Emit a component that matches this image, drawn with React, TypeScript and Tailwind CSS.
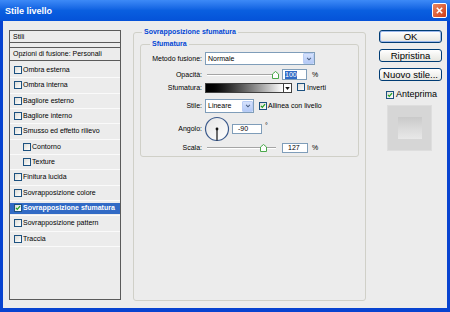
import React from "react";

const styles = [
  { label: "Ombra esterna" },
  { label: "Ombra interna" },
  { label: "Bagliore esterno" },
  { label: "Bagliore interno" },
  { label: "Smusso ed effetto rilievo" },
  { label: "Contorno", indent: true },
  { label: "Texture", indent: true },
  { label: "Finitura lucida" },
  { label: "Sovrapposizione colore" },
  { label: "Sovrapposizione sfumatura", checked: true, selected: true },
  { label: "Sovrapposizione pattern" },
  { label: "Traccia" },
];

function Check({ on, size = "w-[8px] h-[8px]" }: { on?: boolean; size?: string }) {
  return (
    <span
      className={`inline-flex shrink-0 items-center justify-center border border-[#1c5180] bg-gradient-to-br from-[#dcdcd7] to-white ${size}`}
    >
      {on && (
        <svg viewBox="0 0 8 8" className="h-full w-full">
          <path d="M1.3 3.8 L3.1 5.8 L6.7 1.6" stroke="#21a121" strokeWidth="1.7" fill="none" />
        </svg>
      )}
    </span>
  );
}

function Arrow() {
  return (
    <span className="flex h-[11px] w-[11px] shrink-0 items-center justify-center rounded-[1px] border border-[#b9cdf5] bg-gradient-to-b from-[#d6e2fc] to-[#b3c9f6]">
      <svg viewBox="0 0 8 8" className="h-[6px] w-[6px]">
        <path d="M1.5 2.5 L4 5 L6.5 2.5" stroke="#4d6185" strokeWidth="1.4" fill="none" />
      </svg>
    </span>
  );
}

function Thumb() {
  return (
    <svg viewBox="0 0 7 8" className="h-[8px] w-[7px]">
      <path d="M3.5 0.5 L6.5 3 L6.5 7.5 L0.5 7.5 L0.5 3 Z" fill="#fdfdfd" stroke="#4aa84a" strokeWidth="1" />
    </svg>
  );
}

function Slider({ at }: { at: number }) {
  return (
    <div className="relative ml-[5px] h-full w-[74px]">
      <div className="absolute left-0 right-[5px] top-1/2 h-[2px] -translate-y-1/2 border-t border-[#a5a5a5] border-b border-b-white" />
      <div className="absolute top-1/2 -translate-y-1/2" style={{ left: at }}>
        <Thumb />
      </div>
    </div>
  );
}

function Label({ children }: { children: React.ReactNode }) {
  return <span className="w-[61px] shrink-0 text-right">{children}</span>;
}

export default function App() {
  return (
    <div className="flex h-[312px] w-[450px] flex-col bg-[#0843d0] font-['Liberation_Sans',Arial,sans-serif] text-[7px] leading-[8px] text-black">
      <div className="flex h-[21px] shrink-0 items-center justify-between bg-gradient-to-b from-[#3d8af7] via-[#0a5fe0] to-[#0552d8]">
        <span className="pl-[5px] text-[9px] font-bold text-white">Stile livello</span>
        <span className="mr-[3px] flex h-[15px] w-[15px] items-center justify-center rounded-[2px] border border-white bg-gradient-to-br from-[#e9865f] to-[#cf3a12]">
          <svg viewBox="0 0 10 10" className="h-[9px] w-[9px]">
            <path d="M2 2 L8 8 M8 2 L2 8" stroke="white" strokeWidth="1.8" />
          </svg>
        </span>
      </div>

      <div className="mx-[3px] mb-[4px] flex flex-1 items-start bg-[#ececec]">
        {/* styles list */}
        <div className="ml-[6px] mt-[9px] h-[270px] w-[112px] border border-[#5a5a5a]">
          <div className="flex h-[12px] items-center border-b border-[#5a5a5a] pl-[3px]">Stili</div>
          <div className="h-[5px] border-b border-[#5a5a5a]" />
          <div className="flex h-[13px] items-center border-b border-[#5a5a5a] pl-[3px]">
            Opzioni di fusione: Personali
          </div>
          <div className="pt-[2px]">
            {styles.map((s) => (
              <div key={s.label} className="flex h-[15.33px] items-center border-b border-[#fafafa]">
                <div
                  className={`flex h-[11px] w-full items-center ${s.indent ? "pl-[13px]" : "pl-[4px]"} ${
                    s.selected ? "bg-[#316ac5] font-bold text-white" : ""
                  }`}
                >
                  <Check on={s.checked} />
                  <span className="ml-[1px]">{s.label}</span>
                </div>
              </div>
            ))}
          </div>
        </div>

        {/* options */}
        <fieldset className="ml-[12px] mt-[7px] h-[273px] w-[231px] rounded-[3px] border border-[#d0d0c8] px-[6px]">
          <legend className="ml-[2px] px-[2px] font-bold text-[#0046d5]">Sovrapposizione sfumatura</legend>
          <fieldset className="mt-[4px] w-[219px] rounded-[3px] border border-[#d0d0c8]">
            <legend className="ml-[9px] px-[2px] font-bold text-[#0046d5]">Sfumatura</legend>
            <div className="flex flex-col pb-[3px] pt-[4px]">
              <div className="flex h-[13px] items-center">
                <Label>Metodo fusione:</Label>
                <div className="ml-[3px] flex h-[13px] w-[110px] items-center justify-between border border-[#7f9db9] bg-white pl-[2px]">
                  <span>Normale</span>
                  <Arrow />
                </div>
              </div>

              <div className="mt-[4px] flex h-[11px] items-center">
                <Label>Opacità:</Label>
                <Slider at={65} />
                <div className="ml-[1px] flex h-[11px] w-[25px] items-center border border-[#7f9db9] bg-white pl-[2px]">
                  <span className="bg-[#316ac5] text-white">100</span>
                </div>
                <span className="ml-[5px]">%</span>
              </div>

              <div className="mt-[3px] flex h-[10px] items-center">
                <Label>Sfumatura:</Label>
                <div className="ml-[3px] flex h-[10px] w-[87px] border border-[#404040] bg-white">
                  <div className="flex-1 bg-gradient-to-r from-black to-white" />
                  <div className="flex w-[8px] items-center justify-center border-l border-[#404040]">
                    <svg viewBox="0 0 6 4" className="h-[3px] w-[5px]">
                      <path d="M0 0 L6 0 L3 4 Z" fill="#111" />
                    </svg>
                  </div>
                </div>
                <span className="ml-[5px]">
                  <Check />
                </span>
                <span className="ml-[2px]">Inverti</span>
              </div>

              <div className="mt-[6px] flex h-[14px] items-center">
                <Label>Stile:</Label>
                <div className="ml-[3px] flex h-[14px] w-[49px] items-center justify-between border border-[#7f9db9] bg-white pl-[2px]">
                  <span>Lineare</span>
                  <Arrow />
                </div>
                <span className="ml-[5px]">
                  <Check on />
                </span>
                <span className="ml-[1px]">Allinea con livello</span>
              </div>

              <div className="mt-[3px] flex h-[25px] items-center">
                <Label>Angolo:</Label>
                <svg viewBox="0 0 26 26" className="ml-[2px] h-[26px] w-[26px]">
                  <defs>
                    <linearGradient id="dial" x1="0" y1="0" x2="1" y2="1">
                      <stop offset="0" stopColor="#e4e4e4" />
                      <stop offset="1" stopColor="#ffffff" />
                    </linearGradient>
                  </defs>
                  <circle cx="13" cy="13" r="11.5" fill="url(#dial)" stroke="#3b5a8c" strokeWidth="1.2" />
                  <line x1="13" y1="13" x2="13" y2="24.5" stroke="#111" strokeWidth="1.2" />
                  <circle cx="13" cy="13" r="1.4" fill="#111" />
                </svg>
                <div className="ml-[2px] flex h-[10px] w-[30px] items-center border border-[#7f9db9] bg-white pl-[5px]">
                  -90
                </div>
                <span className="ml-[3px] -translate-y-[3px]">°</span>
              </div>

              <div className="mt-[2px] flex h-[10px] items-center">
                <Label>Scala:</Label>
                <Slider at={53} />
                <div className="ml-[1px] flex h-[10px] w-[26px] items-center border border-[#7f9db9] bg-white pl-[5px]">
                  127
                </div>
                <span className="ml-[4px]">%</span>
              </div>
            </div>
          </fieldset>
        </fieldset>

        {/* buttons */}
        <div className="ml-[13px] mt-[9px] flex w-[63px] flex-col text-[9.5px] leading-[11px]">
          {["OK", "Ripristina", "Nuovo stile..."].map((b, i) => (
            <div
              key={b}
              className={`${i ? "mt-[6px]" : ""} flex h-[13px] items-center justify-center rounded-[3px] border border-[#003c74] bg-gradient-to-b from-white to-[#e6e6e0] ${
                i === 0 ? "shadow-[inset_0_0_0_1px_#9bb8ec]" : ""
              }`}
            >
              {b}
            </div>
          ))}
          <div className="ml-[7px] mt-[8px] flex items-center">
            <Check on />
            <span className="ml-[2px] text-[9px]">Anteprima</span>
          </div>
          <div className="ml-[8px] mt-[5px] flex h-[46px] w-[45px] items-center justify-center border border-[#dedede] bg-[#d6d6d6]">
            <div className="h-[22px] w-[24px] bg-gradient-to-b from-[#c9c9c9] via-[#dadada] to-[#e8e8e8]" />
          </div>
        </div>
      </div>
    </div>
  );
}
